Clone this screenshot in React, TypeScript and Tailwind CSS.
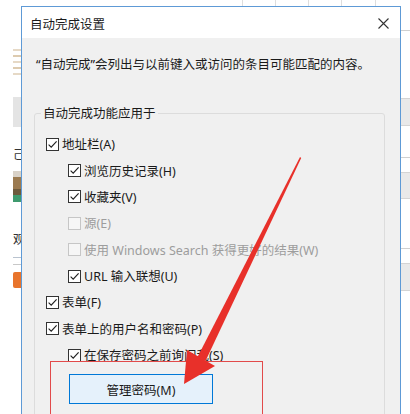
import React from "react";

const FONT = '"Noto Sans", "Noto Sans CJK SC", sans-serif';

function Box({ checked, disabled }: { checked?: boolean; disabled?: boolean }) {
  return (
    <div
      className={
        "w-[13px] h-[13px] shrink-0 border flex items-center justify-center " +
        (disabled ? "border-[#c6c6c6] bg-[#f6f6f6]" : "border-[#333333] bg-white")
      }
    >
      {checked && (
        <svg width="11" height="11" viewBox="0 0 11 11">
          <path d="M1.6 5.6 L4.2 8.2 L9.6 2.4" fill="none" stroke="#202020" strokeWidth="1.15" />
        </svg>
      )}
    </div>
  );
}

function Row({
  label,
  indent,
  checked,
  disabled,
}: {
  label: string;
  indent?: boolean;
  checked?: boolean;
  disabled?: boolean;
}) {
  return (
    <div className={"flex items-center h-[26.375px] gap-[3px] " + (indent ? "ml-[22px]" : "")}>
      <Box checked={checked} disabled={disabled} />
      <span className={"text-[12.5px] leading-[16px] whitespace-nowrap pt-[2px] " + (disabled ? "text-[#9d9d9d]" : "text-[#1a1a1a]")}>
        {label}
      </span>
    </div>
  );
}

export default function App() {
  return (
    <div className="relative w-[410px] h-[414px] overflow-hidden bg-white" style={{ fontFamily: FONT }}>
      {/* background page top grid */}
      <div className="flex h-[6px]">
        <div className="w-[242px]" />
        <div className="w-[33px] border-l border-[#dedede]" />
        <div className="w-[33px] border-l border-[#dedede]" />
        <div className="w-[33px] border-l border-[#dedede]" />
        <div className="w-[34px] border-l border-[#dedede]" />
        <div className="flex-1 border-l border-[#dedede]" />
      </div>
      <div className="flex h-[408px] items-start">
        {/* left strip of background page */}
        <div className="w-[21px] shrink-0 flex flex-col pl-[13px]">
          <div className="h-[43px] shrink-0" />
          <div className="flex flex-col gap-[4px] w-[8px] shrink-0">
            <div className="h-[2px] bg-[#e6d9c6]" />
            <div className="h-[2px] bg-[#ddcbb0]" />
            <div className="h-[2px] bg-[#e6d9c6]" />
            <div className="h-[2px] bg-[#ddcbb0]" />
            <div className="h-[2px] bg-[#e6d9c6]" />
          </div>
          <div className="h-[22px] shrink-0" />
          <div className="h-[30px] w-[8px] shrink-0 bg-[#e4e4e4]" />
          <div className="h-[20px] shrink-0" />
          <div className="h-[16px] shrink-0 text-[12px] leading-[16px] text-[#333] whitespace-nowrap">己</div>
          <div className="h-[8px] shrink-0" />
          <div className="w-[8px] h-[31px] shrink-0 flex flex-col">
            <div className="h-[6px] bg-[#d9d2c8]" />
            <div className="h-[12px] bg-[#9b7a50]" />
            <div className="h-[6px] bg-[#6d5a3c]" />
            <div className="h-[7px] bg-[#3f9a6e]" />
          </div>
          <div className="h-[30px] shrink-0" />
          <div className="h-[16px] shrink-0 text-[12px] leading-[16px] text-[#333] whitespace-nowrap">观</div>
          <div className="h-[9px] shrink-0" />
          <div className="h-[1px] w-[8px] shrink-0 bg-[#b9c3cf]" />
          <div className="h-[6px] shrink-0" />
          <div className="h-[1px] w-[8px] shrink-0 bg-[#c8c8c8]" />
          <div className="h-[7px] shrink-0" />
          <div className="h-[16px] w-[8px] shrink-0 bg-[#e8742c] rounded-l-[2px]" />
        </div>

        {/* dialog */}
        <div className="relative z-10 w-[380px] h-[408px] shrink-0 overflow-hidden border border-b-0 border-[#5e9ad6] flex flex-col">
          <div className="h-[31px] shrink-0 bg-white flex items-center justify-between pl-[8px] pr-[11px] pt-[5px]">
            <span className="text-[12.5px] leading-[16px] text-[#1a1a1a]">自动完成设置</span>
            <svg width="11" height="11" viewBox="0 0 11 11" className="mb-[3px]">
              <path d="M0.5 0.5 L10.5 10.5 M10.5 0.5 L0.5 10.5" stroke="#333" strokeWidth="1.1" />
            </svg>
          </div>
          <div className="flex-1 shrink-0 bg-[#f0f0f0] flex flex-col">
            <div className="shrink-0 pt-[19px] pl-[14px] text-[12.5px] leading-[16px] text-[#1a1a1a] whitespace-nowrap">
              “自动完成”会列出与以前键入或访问的条目可能匹配的内容。
            </div>
            <fieldset className="shrink-0 mt-[31px] ml-[12px] mr-[15px] border border-[#dcdcdc] rounded-[3px] pl-[11px] pt-[9px] pb-[20px]">
              <legend className="ml-[-5px] px-[2px] text-[12.5px] leading-[16px] text-[#1a1a1a] pt-[2px]">自动完成功能应用于</legend>
              <Row label="地址栏(A)" checked />
              <Row label="浏览历史记录(H)" indent checked />
              <Row label="收藏夹(V)" indent checked />
              <Row label="源(E)" indent disabled />
              <Row label="使用 Windows Search 获得更好的结果(W)" indent disabled />
              <Row label="URL 输入联想(U)" indent checked />
              <Row label="表单(F)" checked />
              <Row label="表单上的用户名和密码(P)" checked />
              <Row label="在保存密码之前询问我(S)" indent checked />
              <button className="ml-[23px] mt-[6px] w-[144px] h-[30px] border border-[#0078d7] bg-[#e5f1fb] text-[12.5px] leading-[16px] text-[#1a1a1a] pt-[3px]">
                管理密码(M)
              </button>
            </fieldset>
          </div>
        </div>

        {/* right strip of background page */}
        <div className="w-[9px] shrink-0 flex flex-col">
          <div className="h-[24px] shrink-0" />
          <div className="h-[68px] shrink-0 border-t border-[#d0d0d0]" />
          <div className="h-[28px] shrink-0 bg-[#e9e9e9] border-y border-[#d4d4d4]" />
          <div className="h-[31px] shrink-0" />
          <div className="h-[15px] shrink-0 border-t border-[#d0d0d0]" />
          <div className="h-[27px] shrink-0 bg-[#e9e9e9] border-y border-[#d4d4d4]" />
          <div className="h-[49px] shrink-0" />
          <div className="h-[15px] shrink-0 border-t border-[#d0d0d0]" />
          <div className="h-[28px] shrink-0 bg-[#e9e9e9] border-y border-[#d4d4d4]" />
        </div>
      </div>

      {/* annotation: red rectangle */}
      <div className="absolute z-20 left-[50px] top-[361px] w-[213px] h-[70px] border border-[#e24a4a]" />

      {/* annotation: red arrow */}
      <svg className="absolute z-20 left-0 top-0 pointer-events-none" width="410" height="414" viewBox="0 0 410 414">
        <polygon points="300,157 301.2,158 205.5,361 197.5,357" fill="#e8302a" />
        <polygon points="187,350 215,366 184,384" fill="#e8302a" />
      </svg>
    </div>
  );
}
